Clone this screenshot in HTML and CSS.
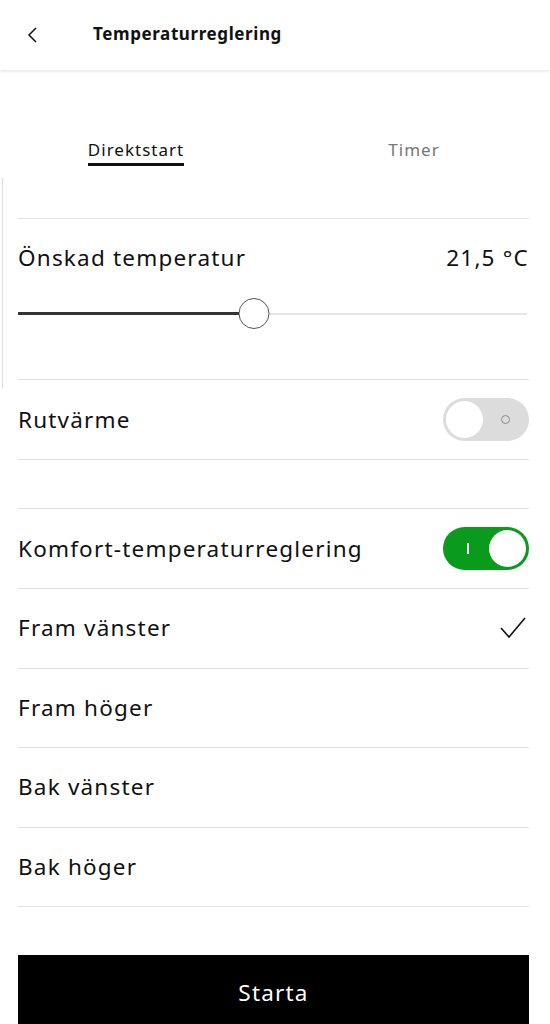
FILE: index.html
```html
<!DOCTYPE html>
<html lang="sv">
<head>
    <meta charset="UTF-8">
    <meta name="viewport" content="width=device-width, initial-scale=1.0">
    <title>Temperaturreglering</title>
    <link rel="stylesheet" href="styles.css">
</head>
<body>
    <header class="topbar">
        <button class="back" aria-label="Tillbaka">
            <svg width="12" height="16" viewBox="0 0 12 16"><polyline points="9,1 2,8 9,15" fill="none" stroke="#111" stroke-width="1.5"/></svg>
        </button>
        <h1 class="title">Temperaturreglering</h1>
    </header>

    <div class="edge"></div>

    <nav class="tabs">
        <div class="tab"><span class="tab-label active">Direktstart</span></div>
        <div class="tab"><span class="tab-label">Timer</span></div>
    </nav>

    <main class="content">
        <section class="temp">
            <div class="temp-head">
                <span>Önskad temperatur</span>
                <span>21,5 °C</span>
            </div>
            <div class="slider">
                <div class="track"></div>
                <div class="fill" style="width: 46.4%"></div>
                <div class="thumb" style="left: 46.4%"></div>
            </div>
        </section>

        <div class="row">
            <span>Rutvärme</span>
            <div class="toggle off"><span class="mark-o"></span><span class="knob"></span></div>
        </div>

        <div class="spacer"></div>

        <div class="row">
            <span>Komfort-temperaturreglering</span>
            <div class="toggle on"><span class="mark-i"></span><span class="knob"></span></div>
        </div>
        <div class="row list">
            <span>Fram vänster</span>
            <svg class="check" width="26" height="22" viewBox="0 0 26 22"><polyline points="1,11 9,20 25,1" fill="none" stroke="#111" stroke-width="1.6"/></svg>
        </div>
        <div class="row list"><span>Fram höger</span></div>
        <div class="row list"><span>Bak vänster</span></div>
        <div class="row list"><span>Bak höger</span></div>

        <button class="start">Starta</button>
    </main>
</body>
</html>
```

FILE: styles.css
```css
body {
    margin: 0;
    font-family: "Noto Sans", "Open Sans", sans-serif;
    color: #111;
    background: #fff;
}
.topbar {
    height: 70px;
    display: flex;
    align-items: center;
    box-shadow: 0 1px 3px rgba(0,0,0,0.12);
    position: relative;
}
.back {
    background: none;
    border: none;
    padding: 0;
    margin-left: 27px;
    width: 12px;
    height: 16px;
    display: flex;
}
.title {
    margin: 0 0 0 54px;
    font-size: 17px;
    font-weight: 700;
    letter-spacing: 0.6px;
    line-height: 22px;
    padding-bottom: 2px;
}
.edge {
    position: absolute;
    left: 0;
    top: 178px;
    width: 2px;
    height: 210px;
    border-right: 1px solid #ddd;
}
.tabs {
    display: flex;
    padding-top: 68px;
    margin-bottom: 52px;
}
.tab {
    flex: 1;
    text-align: center;
}
.tab:first-child { padding-right: 6px; }
.tab-label {
    display: inline-block;
    font-size: 17px;
    letter-spacing: 1px;
    line-height: 24px;
    color: #777;
    padding-bottom: 1px;
    border-bottom: 3px solid transparent;
}
.tab-label.active {
    color: #111;
    border-bottom-color: #111;
}
.content {
    padding: 0 21px 0 18px;
    font-size: 22.5px;
    letter-spacing: 1.2px;
}
.temp {
    border-top: 1px solid #e2e2e2;
    border-bottom: 1px solid #e2e2e2;
    padding: 25px 0 49px;
}
.temp-head {
    display: flex;
    justify-content: space-between;
    line-height: 28px;
}
.slider {
    position: relative;
    height: 32px;
    margin: 26px 2px 0 0;
}
.track {
    position: absolute;
    left: 0;
    right: 0;
    top: 15px;
    height: 2px;
    background: #e6e6e6;
}
.fill {
    position: absolute;
    left: 0;
    top: 14px;
    height: 3px;
    background: #333;
}
.thumb {
    position: absolute;
    top: 0;
    width: 29px;
    height: 29px;
    transform: translateX(-50%);
    border: 1.5px solid #555;
    border-radius: 50%;
    background: #fff;
}
.row {
    height: 79px;
    border-bottom: 1px solid #e2e2e2;
    display: flex;
    align-items: center;
    justify-content: space-between;
}
.row.list { height: 78.5px; }
.row.list span { margin-top: -1px; }
.spacer {
    height: 48px;
    border-bottom: 1px solid #e2e2e2;
}
.toggle {
    position: relative;
    width: 86px;
    height: 43px;
    border-radius: 22px;
}
.toggle.off { background: #dcdcdc; }
.toggle.on { background: #0a9a1c; }
.knob {
    position: absolute;
    top: 3px;
    width: 37px;
    height: 37px;
    border-radius: 50%;
    background: #fff;
    box-sizing: border-box;
}
.off .knob { left: 3px; }
.on .knob { right: 3px; }
.mark-o {
    position: absolute;
    left: 58px;
    top: 17px;
    width: 9px;
    height: 9px;
    border: 1.5px solid #888;
    border-radius: 50%;
    box-sizing: border-box;
}
.mark-i {
    position: absolute;
    left: 24px;
    top: 16px;
    width: 2px;
    height: 11px;
    background: #fff;
}
.check { margin-right: 3px; }
.start {
    display: block;
    width: 100%;
    height: 74px;
    margin-top: 48px;
    border: none;
    background: #000;
    color: #fff;
    font-family: inherit;
    font-size: 22.5px;
    letter-spacing: 1.2px;
}
```
